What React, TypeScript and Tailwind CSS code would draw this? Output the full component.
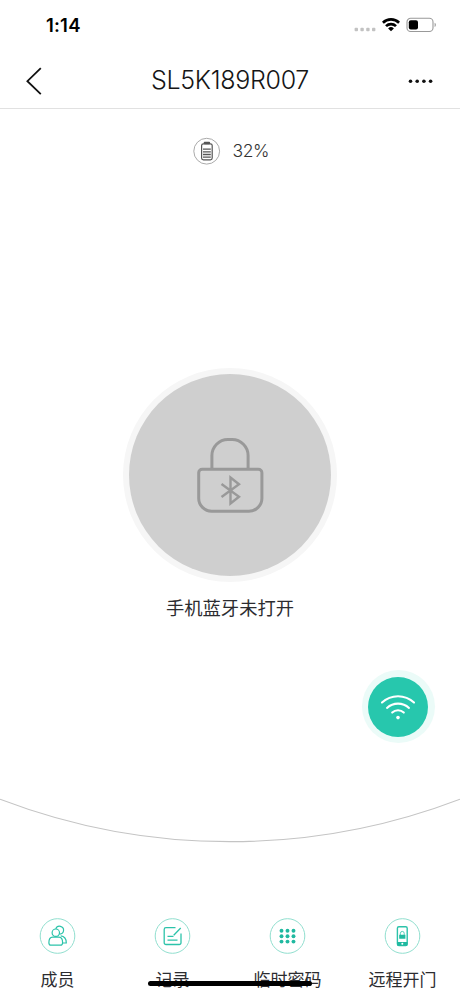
import type { ReactNode } from 'react';

function StatusBar() {
  return (
    <div className="flex h-[53px] items-start justify-between pl-[46px] pr-[23px] pt-[13px]">
      <span className="text-[18.5px] font-semibold leading-6 tracking-[0.2px] text-black">1:14</span>
      <div className="flex h-6 items-center">
        <svg width="22" height="24" viewBox="0 0 22 24" fill="#c2c2c2">
          <rect x="0.6" y="14.8" width="3.4" height="3.4" rx="0.9" />
          <rect x="6.4" y="14.8" width="3.4" height="3.4" rx="0.9" />
          <rect x="12.2" y="14.8" width="3.4" height="3.4" rx="0.9" />
          <rect x="18" y="14.8" width="3.4" height="3.4" rx="0.9" />
        </svg>
        <svg className="ml-[6px]" width="18" height="24" viewBox="0 0 18 24" fill="none" stroke="#000" strokeWidth="2.7">
          <path d="M0.9 9.7a11.6 11.6 0 0 1 16.2 0" />
          <path d="M4 13.1a7.2 7.2 0 0 1 10 0" />
          <path d="M9 18.2L6.1 15.4a4.2 4.2 0 0 1 5.8 0z" fill="#000" stroke="none" />
        </svg>
        <svg className="ml-[6px]" width="31" height="24" viewBox="0 0 31 24">
          <rect x="1" y="5.3" width="26" height="13.2" rx="3.6" fill="none" stroke="#999" strokeWidth="1.1" />
          <rect x="2.8" y="7.2" width="9.2" height="9.4" rx="2" fill="#000" />
          <path d="M28.6 9.8c1.7.6 1.7 3.6 0 4.2z" fill="#999" />
        </svg>
      </div>
    </div>
  );
}

function Header() {
  return (
    <header className="flex h-14 items-center justify-between border-b border-[#e1e1e1] pl-[26px] pr-[26px]">
      <svg width="28" height="30" viewBox="0 0 28 30" fill="none" stroke="#111" strokeWidth="1.8">
        <path d="M14.8 2.2L1.4 15.2l13.4 13" />
      </svg>
      <h1 className="mb-px whitespace-nowrap text-[25px] font-light leading-8 tracking-[-0.3px] text-[#161616]">SL5K189R007</h1>
      <svg width="28" height="30" viewBox="0 0 28 30" fill="#111">
        <circle cx="4.5" cy="15.3" r="1.8" />
        <circle cx="11.2" cy="15.3" r="1.8" />
        <circle cx="17.9" cy="15.3" r="1.8" />
        <circle cx="24.6" cy="15.3" r="1.8" />
      </svg>
    </header>
  );
}

function BatteryLevel() {
  return (
    <div className="mt-7 flex h-[28px] items-center pl-[193px]">
      <svg width="28" height="28" viewBox="0 0 28 28">
        <circle cx="13.7" cy="14.2" r="12.9" fill="none" stroke="#aaa" strokeWidth="1" />
        <rect x="10.7" y="4.7" width="6.4" height="2.6" rx="1" fill="#555" />
        <rect x="8.6" y="6.8" width="10.6" height="16" rx="1.8" fill="none" stroke="#555" strokeWidth="1.2" />
        <path d="M10 12.1h7.8M10 14.8h7.8M10 17.5h7.8M10 20.2h7.8" stroke="#555" strokeWidth="1.3" />
      </svg>
      <span className="ml-[11.5px] text-[17.5px] font-light leading-6 tracking-[-0.4px] text-[#333]">32%</span>
    </div>
  );
}

function LockButton() {
  return (
    <button className="mx-auto mt-[203px] flex size-[214px] items-center justify-center rounded-full bg-[#f6f6f6]">
      <span className="flex size-[202px] items-center justify-center rounded-full bg-[#cfcfcf]">
        <svg width="68" height="78" viewBox="0 0 68 78" fill="none" stroke="#999" strokeWidth="3">
          <path d="M15.9 33V19.5a16 16 0 0 1 16-16h4.200a16 16 0 0 1 16 16V33" />
          <path d="M6.200 33.200h56.200a3.500 3.500 0 0 1 3.500 3.500V62.200a13 13 0 0 1-13 13H15.700a13 13 0 0 1-13-13V36.700a3.500 3.500 0 0 1 3.500-3.500z" />
          <path d="M25.500 48L43 60.800 34.500 67.500V41.500L43 48.300 25.500 61" strokeWidth="2.400" />
        </svg>
      </span>
    </button>
  );
}

function WifiButton() {
  return (
    <button className="ml-auto mr-[25.5px] mt-[48px] flex size-[73px] items-center justify-center rounded-full bg-[#ebfbf8]">
      <span className="flex size-[60px] items-center justify-center rounded-full bg-[#27c7ad]">
        <svg width="38" height="30" viewBox="0 0 38 30" fill="none" stroke="#fff" strokeWidth="2.1" strokeLinecap="round">
          <path d="M3 10.600a23.500 23.500 0 0 1 32 0" />
          <path d="M8 15.900a16.300 16.300 0 0 1 22 0" />
          <path d="M13.200 20.600a8.400 8.400 0 0 1 11.600 0" />
          <circle cx="19" cy="25.6" r="1.8" fill="#fff" stroke="none" />
        </svg>
      </span>
    </button>
  );
}

function NavItem({ label, children }: { label: string; children: ReactNode }) {
  return (
    <button className="flex flex-col items-center">
      <svg className="overflow-visible" width="35" height="36" viewBox="0.5 0 35 36" fill="none" stroke="#2cc3aa" strokeWidth="1.2">
        <circle cx="18" cy="18" r="17.3" stroke="#91dfcf" strokeWidth="1" />
        {children}
      </svg>
      <span className="mt-[14px] whitespace-nowrap text-[17px] font-normal leading-6 text-[#2c2c30]">{label}</span>
    </button>
  );
}

const keypadRows = [12.8, 18.2, 23.6];
const keypadColumns = [12, 18, 24];

export default function App() {
  return (
    <main className="relative flex h-[996px] w-[460px] flex-col overflow-hidden bg-white font-['Inter','Noto_Sans_CJK_SC',sans-serif]">
      <StatusBar />
      <Header />
      <BatteryLevel />
      <LockButton />
      <p className="mt-[12px] text-center text-[18.3px] font-normal leading-7 text-[#2c2c30]">手机蓝牙未打开</p>
      <WifiButton />
      <svg className="mt-[55px] shrink-0" width="460" height="46" viewBox="0 0 460 46" fill="none">
        <path d="M0 1.200A643.600 643.600 0 0 0 460 1.200" stroke="#c4c4c4" strokeWidth="1.2" />
      </svg>
      <nav className="mt-[74px] grid grid-cols-4">
        <NavItem label="成员">
          <path d="M16.300 10.900a4 4 0 1 1 3.900 5.300M21.200 17.900c4 .4 5.600 2.700 5.600 7.100h-3.700" />
          <circle cx="16.3" cy="14.7" r="3.7" fill="#fff" />
          <path d="M13.100 19.200h6.300c2.600 0 3.700 2 3.700 5.500 0 1.700-.7 2.500-2.200 2.500h-9.500c-1.400 0-2-.8-2-2.500 0-3.500 1.100-5.500 3.700-5.500z" fill="#fff" />
        </NavItem>
        <NavItem label="记录">
          <path d="M21 9.700H11.500a1.800 1.800 0 0 0-1.800 1.800v13.200a1.800 1.800 0 0 0 1.800 1.800h13.200a1.800 1.800 0 0 0 1.800-1.800v-9.200M26.200 10l-7 7.200M13 18.300h6M13 22.200h10" strokeWidth="1.3" />
        </NavItem>
        <NavItem label="临时密码">
          {keypadRows.map((y) =>
            keypadColumns.map((x) => <circle key={`${x}-${y}`} cx={x} cy={y} r="1.95" fill="#20b9a0" stroke="none" />),
          )}
        </NavItem>
        <NavItem label="远程开门">
          <rect x="12.9" y="8.7" width="9.8" height="18.8" rx="1.5" strokeWidth="1.4" />
          <path d="M12.600 24h10.400v2.500a1.300 1.300 0 0 1-1.300 1.300h-7.800a1.300 1.300 0 0 1-1.300-1.300zM14.700 16.800h6.200v3.900h-6.200z" fill="#20b9a0" stroke="none" />
          <path d="M15.900 17v-1.700a1.900 1.900 0 0 1 3.800 0V17" strokeWidth=".8" />
          <circle cx="17.8" cy="25.8" r="1" fill="#fff" stroke="none" />
        </NavItem>
      </nav>
      <div className="absolute left-[148px] top-[981px] h-[5px] w-[164px] rounded-full bg-black" />
    </main>
  );
}
